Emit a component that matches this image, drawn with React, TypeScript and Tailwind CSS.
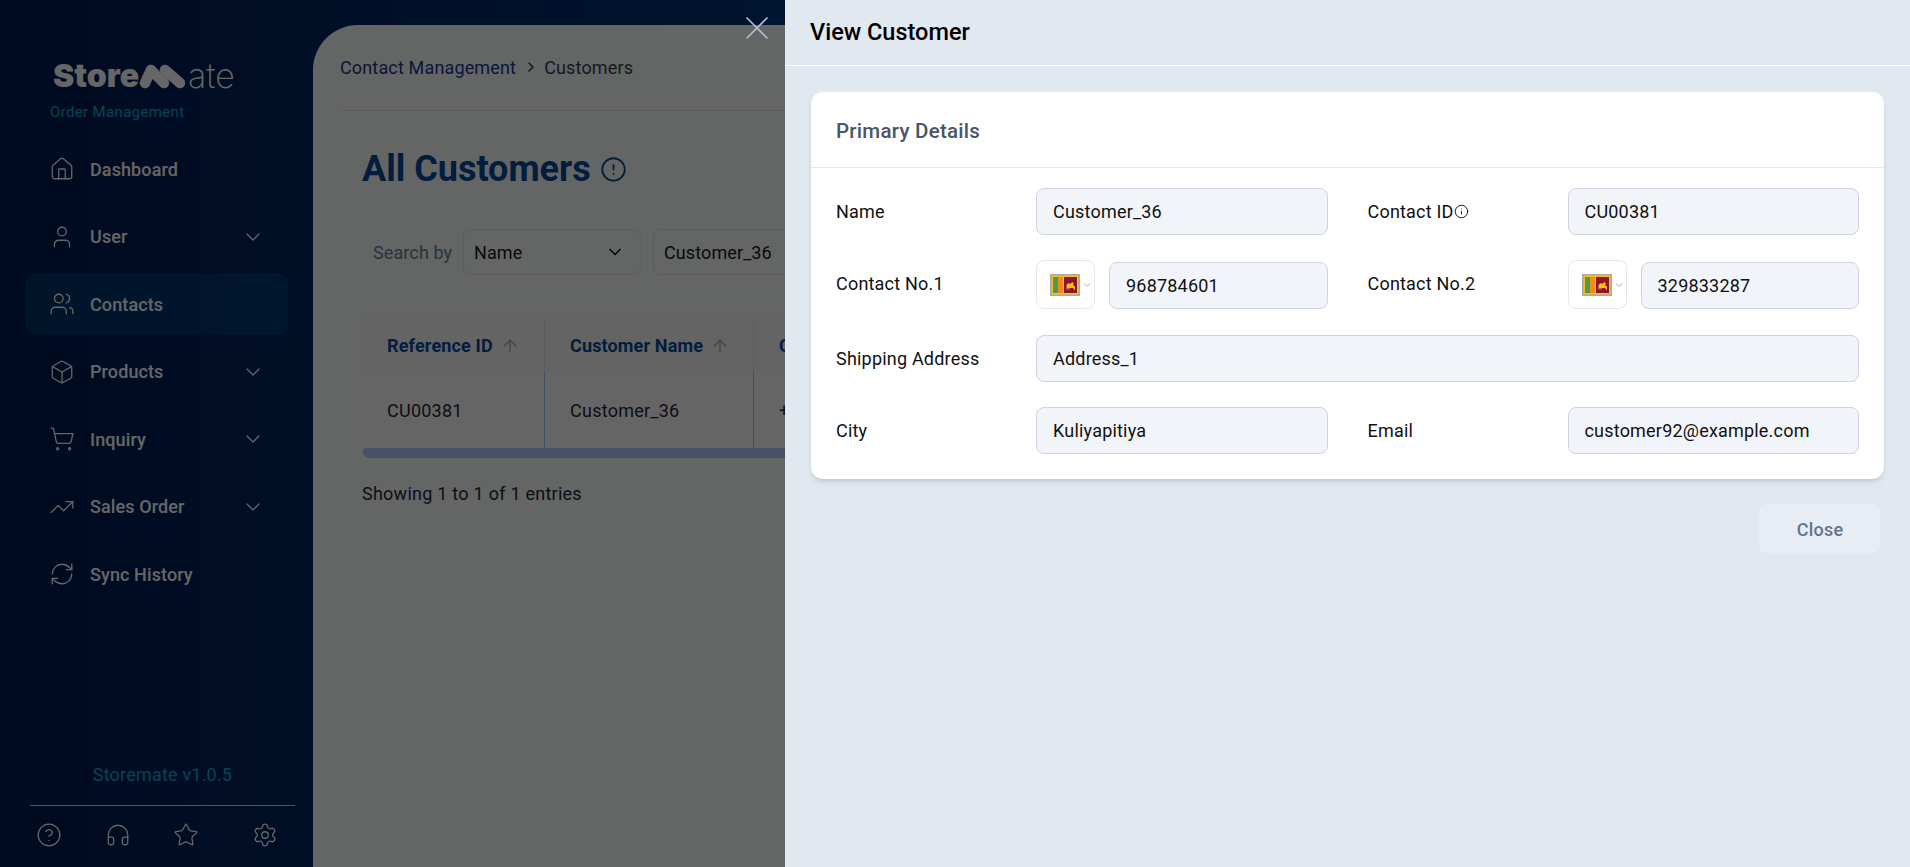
import { ArrowUp, Box, ChevronDown, ChevronRight, CircleAlert, CircleHelp, Headphones, House, Info, RefreshCw, Settings, ShoppingCart, Star, TrendingUp, User, Users, X } from "lucide-react";

const nav = [
  { label: "Dashboard", Icon: House },
  { label: "User", Icon: User, more: true },
  { label: "Contacts", Icon: Users, active: true },
  { label: "Products", Icon: Box, more: true },
  { label: "Inquiry", Icon: ShoppingCart, more: true },
  { label: "Sales Order", Icon: TrendingUp, more: true },
  { label: "Sync History", Icon: RefreshCw },
];

function Flag() {
  return (
    <svg width="30" height="22" viewBox="0 0 30 22" className="shrink-0">
      <rect width="30" height="22" fill="#a9a9a9" />
      <rect x="1.500" y="1.500" width="27" height="19" fill="#f5c116" />
      <rect x="3" y="3" width="5" height="16" fill="#4f9a52" />
      <rect x="8" y="3" width="5" height="16" fill="#f78a12" />
      <rect x="14" y="3" width="13" height="16" fill="#8d1533" />
      <path d="M16.500 15.500v-4.500l2-2 1.500 1 2.500-2 1.500 2-1 1.500 2 1v3h-1.500v-1.500h-4v1.500h-1v-1.500h-1v1.500z" fill="#f5c116" />
    </svg>
  );
}

function Field({ value }: { value: string }) {
  return (
    <div className="flex h-[47px] min-w-0 flex-1 items-center rounded-lg border border-[#cdd3df] bg-[#f1f5f9] px-4 text-[18px] tracking-[0.2px] text-[#111111]">
      {value}
    </div>
  );
}

function Phone({ value }: { value: string }) {
  return (
    <div className="flex items-start gap-[14px]">
      <div className="-mt-[2px] flex h-[49px] w-[59px] shrink-0 items-center gap-[1px] rounded-lg border border-[#e2e8f0] pl-[13px]">
        <Flag />
        <ChevronDown size={12} strokeWidth={1.5} className="shrink-0 text-[#8a94a6]" />
      </div>
      <Field value={value} />
    </div>
  );
}

function Row({ label, children }: { label: React.ReactNode; children: React.ReactNode }) {
  return (
    <div className="grid grid-cols-[200px_1fr] items-center">
      <div className="flex items-center text-[18px] tracking-[0.2px] text-[#111111]">{label}</div>
      <div>{children}</div>
    </div>
  );
}

export default function App() {
  return (
    <div className="relative flex h-[867px] w-full overflow-hidden bg-gradient-to-r from-[#001a50] to-[#0560b4] [font-family:Roboto,sans-serif]">
      <aside className="flex w-[313px] shrink-0 flex-col">
        <div className="pl-[50px] pt-[58px]">
          <div className="flex h-[36px] items-center pl-[3px] text-[#ffffff]">
            <span className="text-[32px] font-black leading-none [font-family:Inter,sans-serif]">Store</span>
            <svg width="48" height="25" viewBox="0 0 48 25" className="shrink-0">
              <g fill="none" stroke="#ffffff" strokeWidth="10.500" strokeLinecap="round">
                <path d="M6 19 12 6" />
                <path d="M12 6 25 19" />
                <path d="M26 6 41 19" />
              </g>
            </svg>
            <span className="ml-[1px] text-[34px] font-extralight leading-none [font-family:Inter,sans-serif]">ate</span>
          </div>
          <div className="mt-[8px] text-[15px] leading-[20px] tracking-[0.35px] text-[#10acd8]">Order Management</div>
        </div>
        <nav className="mt-[16px] flex flex-col gap-[5.500px] px-[25px]">
          {nav.map(({ label, Icon, more, active }) => (
            <div key={label} className={`flex h-[62px] items-center rounded-xl pl-[24px] pr-[23px] text-[18px] font-medium tracking-[0.1px] text-white ${active ? "bg-[#065f99]/35" : ""}`}>
              <Icon size={26} strokeWidth={1.2} className="shrink-0" />
              <span className="ml-[15px] flex-1">{label}</span>
              {more ? <ChevronDown size={24} strokeWidth={1.25} /> : null}
            </div>
          ))}
        </nav>
        <div className="mt-auto pb-[19px]">
          <div className="pl-[12px] text-center text-[18px] tracking-[0.2px] text-[#10acd8]">Storemate v1.0.5</div>
          <div className="ml-[30px] mr-[18px] mt-[17px] border-t border-white/80" />
          <div className="mt-[16px] flex items-center text-white">
            <CircleHelp size={26} strokeWidth={1.2} className="ml-[36px]" />
            <Headphones size={26} strokeWidth={1.2} className="ml-[43px]" />
            <Star size={26} strokeWidth={1.2} className="ml-[42px]" />
            <Settings size={26} strokeWidth={1.2} className="ml-[53px]" />
          </div>
        </div>
      </aside>

      <main className="mt-[25px] min-w-0 flex-1 rounded-tl-[45px] bg-[#fbfcfd] pl-[27px]">
        <div className="flex h-[86px] items-center border-b border-[#e5e7eb] pb-[1px] text-[18px] tracking-[0.15px]">
          <span className="text-[#1e3a8a]">Contact Management</span>
          <ChevronRight size={16} className="ml-[7px] text-[#1f2937]" />
          <span className="ml-[5px] text-[#374151]">Customers</span>
        </div>
        <div className="pl-[22px]">
          <div className="mt-[33px] flex items-center gap-[9px]">
            <h1 className="text-[36px] font-bold leading-[50px] text-[#064a9c]">All Customers</h1>
            <CircleAlert size={27} strokeWidth={1.6} className="text-[#064a9c]" />
          </div>
          <div className="mt-[35px] flex items-center pl-[11px] text-[18px] tracking-[0.1px]">
            <span className="w-[90px] text-[#64809f]">Search by</span>
            <div className="flex h-[46px] w-[179px] items-center justify-between rounded-lg border border-[#e5e7eb] pl-[10px] pr-[16px] text-[#111827]">
              Name <ChevronDown size={20} />
            </div>
            <div className="ml-[11px] flex h-[46px] w-[300px] items-center rounded-lg border border-[#e5e7eb] pl-[10px] text-[#111827]">Customer_36</div>
          </div>
          <div className="mt-[43px] w-[900px] overflow-hidden rounded-b-lg">
            <div className="flex h-[55px] items-center bg-[#f9fafb] text-[18px] font-bold tracking-[0.15px] text-[#064a9c]">
              <div className="flex h-full w-[183px] items-center gap-[7px] border-r border-[#e5e7eb] pl-[25px]">Reference ID <ArrowUp size={20} strokeWidth={1.5} className="text-[#9ca3af]" /></div>
              <div className="flex h-full w-[209px] items-center gap-[7px] border-r border-[#e5e7eb] pl-[25px]">Customer Name <ArrowUp size={20} strokeWidth={1.5} className="text-[#9ca3af]" /></div>
              <div className="pl-[25px]">Contact No</div>
            </div>
            <div className="flex h-[75px] items-center bg-[#fdfdfd] text-[18px] tracking-[0.25px] text-[#1f2937]">
              <div className="flex h-full w-[183px] items-center border-r border-[#93c5fd] pl-[25px]">CU00381</div>
              <div className="flex h-full w-[209px] items-center border-r border-[#93c5fd] pl-[25px]">Customer_36</div>
              <div className="pl-[25px]">+94968784601</div>
            </div>
            <div className="h-[10px] rounded-full bg-[#b0ccff]" />
          </div>
          <div className="mt-[22px] text-[18px] tracking-[0.25px] text-[#1f2937]">Showing 1 to 1 of 1 entries</div>
        </div>
      </main>

      <div className="absolute inset-0 bg-black/60" />

      <X size={40} strokeWidth={1} className="absolute left-[737px] top-[8px] text-[#b4bdcf]" />

      <section className="absolute bottom-0 right-0 top-0 w-[1125px] bg-[#e2e8f0]">
        <header className="flex h-[66px] items-center border-b border-white pl-[25px] pt-[1px] text-[23.500px] font-medium text-black">View Customer</header>
        <div className="mx-[26px] mt-[26px] rounded-xl bg-white shadow-md">
          <div className="flex h-[76px] items-center border-b border-[#e2e8f0] pl-[25px] pt-[4px] text-[20.500px] font-medium tracking-[0.25px] text-[#475569]">Primary Details</div>
          <div className="flex flex-col px-[25px] pb-[25px] pt-[20px]">
            <div className="grid grid-cols-2 gap-x-[40px]">
              <Row label="Name"><Field value="Customer_36" /></Row>
              <Row label={<>Contact ID<Info size={15} strokeWidth={1.5} /></>}><Field value="CU00381" /></Row>
            </div>
            <div className="mt-[27px] grid grid-cols-2 gap-x-[40px]">
              <Row label={<span className="-mt-[4px]">Contact No.1</span>}><Phone value="968784601" /></Row>
              <Row label={<span className="-mt-[4px]">Contact No.2</span>}><Phone value="329833287" /></Row>
            </div>
            <div className="mt-[26px] grid grid-cols-[200px_1fr] items-center">
              <div className="text-[18px] tracking-[0.2px] text-[#111111]">Shipping Address</div>
              <Field value="Address_1" />
            </div>
            <div className="mt-[25px] grid grid-cols-2 gap-x-[40px]">
              <Row label="City"><Field value="Kuliyapitiya" /></Row>
              <Row label="Email"><Field value="customer92@example.com" /></Row>
            </div>
          </div>
        </div>
        <div className="mr-[30px] mt-[25px] flex justify-end">
          <button className="h-[49px] w-[121px] rounded-lg bg-[#e8edf5] pl-[1px] pt-[1px] text-[18px] font-medium tracking-[0.2px] text-[#64748b]">Close</button>
        </div>
      </section>
    </div>
  );
}
